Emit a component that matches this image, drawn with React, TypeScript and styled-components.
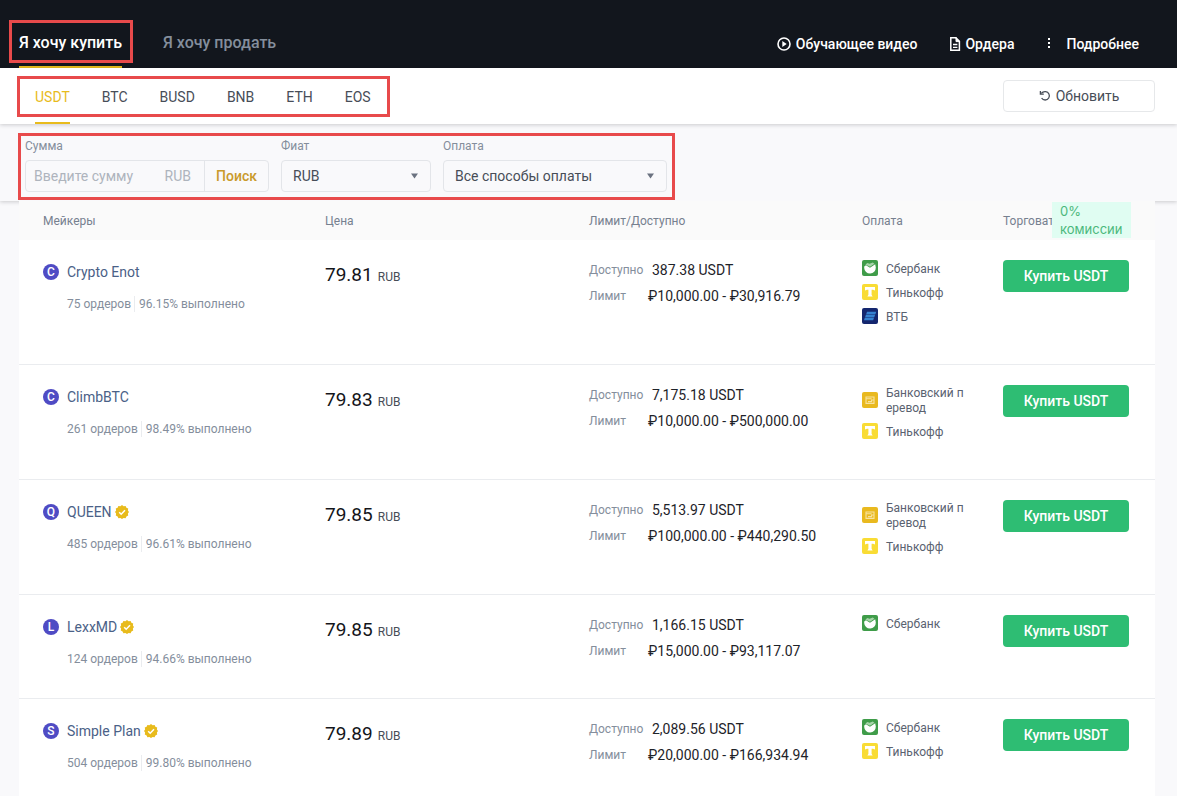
import React from "react";
import styled, { createGlobalStyle, css } from "styled-components";

const ACCENT = "#e8bb1c";

const GlobalStyle = createGlobalStyle`
  *, *::before, *::after { box-sizing: border-box; }
  body {
    margin: 0;
    background: #f9f9fb;
    color: #1e2329;
    font-family: Roboto, "Noto Sans", sans-serif;
    font-size: 14px;
    line-height: 16px;
  }
  button, input, select { font: inherit; color: inherit; margin: 0; }
`;

const Page = styled.div`
  min-height: 100vh;
  overflow: hidden;
`;

/* Red frame drawn around a group of controls */
const Frame = styled.div<{ $inset: string }>`
  position: relative;
  &::after {
    content: "";
    position: absolute;
    inset: ${(p) => p.$inset};
    border: 3px solid #e84a4b;
    pointer-events: none;
    z-index: 2;
  }
`;

const Header = styled.header`
  display: flex;
  justify-content: space-between;
  height: 68px;
  padding: 18px 38px 0 19px;
  background: #12161d;
`;

const ModeTabs = styled.nav`
  display: flex;
  gap: 41px;
`;

const ModeTab = styled.button<{ $active?: boolean }>`
  height: 50px;
  padding: 2px 0 0;
  border: 0;
  background: none;
  font-size: 16px;
  font-weight: 500;
  color: ${(p) => (p.$active ? "#fff" : "#848e9c")};
  border-bottom: 2px solid ${(p) => (p.$active ? ACCENT : "transparent")};
`;

const HeaderLinks = styled.nav`
  display: flex;
  align-items: center;
  gap: 32px;
  padding-top: 2px;
`;

const HeaderLink = styled.a`
  display: flex;
  align-items: center;
  gap: 4px;
  color: #fff;
  font-weight: 500;
  text-decoration: none;
`;

const CoinBar = styled.div`
  position: relative;
  z-index: 1;
  display: flex;
  align-items: center;
  justify-content: space-between;
  height: 56px;
  padding: 0 22px 0 35px;
  background: #fff;
  box-shadow: 0 1px 4px rgba(20, 21, 26, 0.2);
`;

const CoinTabs = styled.nav`
  display: flex;
  gap: 32px;
`;

const CoinTab = styled.button<{ $active?: boolean }>`
  height: 56px;
  padding: 4px 0 0;
  border: 0;
  background: none;
  color: ${(p) => (p.$active ? ACCENT : "#474d57")};
  border-bottom: 2px solid ${(p) => (p.$active ? ACCENT : "transparent")};
`;

const RefreshButton = styled.button`
  display: flex;
  align-items: center;
  justify-content: center;
  gap: 5px;
  width: 152px;
  height: 32px;
  border: 1px solid #e6e8ea;
  border-radius: 4px;
  background: #fff;
  color: #474d57;
`;

const FilterBar = styled.div`
  position: relative;
  display: flex;
  height: 77px;
  padding: 14px 25px 0;
  background: #f9f9fb;
  box-shadow: 0 1px 4px rgba(20, 21, 26, 0.2);
`;

const Filters = styled.form`
  display: flex;
  gap: 12px;
`;

const Field = styled.div<{ $width: number }>`
  width: ${(p) => p.$width}px;
`;

const FieldLabel = styled.label`
  display: block;
  margin-bottom: 6px;
  font-size: 12px;
  color: #848e9c;
`;

const controlBox = css`
  height: 32px;
  border: 1px solid #e3e5e9;
  border-radius: 4px;
`;

const AmountBox = styled.div`
  ${controlBox}
  display: flex;
  align-items: center;
`;

const AmountInput = styled.input`
  flex: 1;
  min-width: 0;
  padding: 0 8px;
  border: 0;
  background: none;
  outline: 0;
  &::placeholder { color: #aeb4bd; opacity: 1; }
`;

const AmountUnit = styled.span`
  padding-right: 13px;
  color: #aeb4bd;
`;

const SearchButton = styled.button`
  width: 64px;
  height: 30px;
  padding: 0;
  border: 0;
  border-left: 1px solid #e3e5e9;
  background: none;
  color: #c99a2b;
  font-weight: 500;
`;

const SelectBox = styled.div`
  position: relative;
  svg {
    position: absolute;
    right: 12px;
    top: 13px;
    pointer-events: none;
  }
`;

const Select = styled.select`
  ${controlBox}
  appearance: none;
  width: 100%;
  padding: 0 24px 0 11px;
  background: none;
  color: #474d57;
`;

const Content = styled.main`
  padding: 0 22px 0 19px;
`;

const Offers = styled.table`
  width: 100%;
  table-layout: fixed;
  border-collapse: collapse;
  background: #fff;
`;

const HeadCell = styled.th<{ $width: number }>`
  position: relative;
  width: ${(p) => p.$width}px;
  height: 39px;
  padding: 0;
  background: #fafafa;
  color: #76808f;
  font-size: 12px;
  font-weight: 400;
  text-align: left;
  &:first-child { padding-left: 24px; }
`;

const FeeBadge = styled.span`
  position: absolute;
  left: 49px;
  top: 1px;
  width: 79px;
  padding: 0 8px;
  background: #e0fdf2;
  color: #4cb87c;
  font-family: Inter, sans-serif;
  font-size: 13px;
  line-height: 18px;
`;

const OfferRow = styled.tr`
  border-bottom: 1px solid #eaecef;
`;

const Cell = styled.td`
  padding: 20px 0 27px;
  vertical-align: top;
  &:first-child { padding-left: 24px; }
`;

const Maker = styled.div`
  display: flex;
  align-items: center;
  height: 24px;
`;

const Avatar = styled.span`
  width: 16px;
  height: 16px;
  margin-right: 8px;
  border-radius: 50%;
  background: #4f4bc4;
  color: #fff;
  font-size: 12px;
  font-weight: 500;
  text-align: center;
`;

const MakerLink = styled.a`
  margin-right: 3px;
  color: #4a6187;
  text-decoration: none;
`;

const Stats = styled.div`
  display: flex;
  align-items: center;
  height: 24px;
  margin-top: 8px;
  padding: 0 0 0 24px;
  color: #848e9c;
  font-size: 12px;
  span + span {
    margin-left: 3px;
    padding-left: 4px;
    border-left: 1px solid #eaecef;
  }
`;

const Price = styled.div`
  padding-top: 1px;
  font-size: 19px;
  line-height: 28px;
  color: #14151a;
  small {
    margin-left: 5px;
    font-size: 12px;
    color: #474d57;
  }
`;

const Limits = styled.dl`
  display: grid;
  grid-template-columns: 55px 1fr;
  align-items: center;
  gap: 8px;
  margin: 0;
  padding-top: 1px;
  line-height: 18px;
`;

const Term = styled.dt`
  font-size: 12px;
  color: #848e9c;
`;

const Value = styled.dd<{ $wide?: boolean }>`
  margin: 0 0 0 ${(p) => (p.$wide ? "-4px" : "0")};
`;

const Payments = styled.ul`
  display: grid;
  gap: 8px;
  margin: 0;
  padding: 0 0 13px;
  list-style: none;
`;

const Payment = styled.li`
  display: flex;
  align-items: center;
  gap: 8px;
  color: #5a6270;
  font-size: 12px;
  line-height: 15px;
  min-height: 16px;
  svg { flex: none; }
  span {
    width: 80px;
    margin: 1px 0 -1px;
    word-break: break-all;
  }
`;

const BuyButton = styled.button`
  width: 126px;
  height: 32px;
  padding: 0;
  border: 0;
  border-radius: 4px;
  background: #2ebd73;
  color: #fff;
  font-weight: 500;
`;

const PlayIcon = () => (
  <svg width="16" height="16" viewBox="0 0 16 16" aria-hidden="true">
    <circle cx="8" cy="8" r="6" fill="none" stroke="#fff" strokeWidth="1.6" />
    <path d="M6.3 5v6l4.4-3z" fill="#fff" />
  </svg>
);

const DocIcon = () => (
  <svg width="12" height="16" viewBox="0 0 12 16" fill="none" stroke="#fff" aria-hidden="true">
    <path d="M1.8 1.8h5l3.6 3.6v8.8H1.8z" strokeWidth="1.5" />
    <path d="M7 1.2v4.4h4" fill="#fff" strokeWidth="1" />
    <path d="M4 8.5h4.4M4 11.3h4.4" strokeWidth="1.3" />
  </svg>
);

const DotsIcon = () => (
  <svg width="16" height="16" viewBox="0 0 16 16" fill="#fff" aria-hidden="true">
    <rect x="2" y="2" width="2" height="2" />
    <rect x="2" y="6" width="2" height="2" />
    <rect x="2" y="10" width="2" height="2" />
  </svg>
);

const RefreshIcon = () => (
  <svg width="12" height="12" viewBox="0 0 12 12" fill="none" stroke="#474d57" strokeWidth="1.3" aria-hidden="true">
    <path d="M2.2 3.4C3.4 2 5 1.4 6.6 1.6a4.2 4.2 0 1 1-4 6.4" />
    <path d="M1.4.9v3.2h3.4" />
  </svg>
);

const Caret = () => (
  <svg width="9" height="6" viewBox="0 0 9 6" aria-hidden="true">
    <path d="M1 .5h7L4.5 5.5z" fill="#6b7280" />
  </svg>
);

const VerifiedIcon = () => (
  <svg width="14" height="14" viewBox="0 0 14 14" role="img" aria-label="Проверен">
    <path
      d="M7 0l1.6 1.2 2-.3.8 1.8 1.8.8-.3 2L14 7l-1.1 1.6.3 2-1.8.8-.8 1.8-2-.3L7 14l-1.6-1.1-2 .3-.8-1.8-1.8-.8.3-2L0 7l1.1-1.5-.3-2 1.8-.8.8-1.8 2 .3z"
      fill={ACCENT}
    />
    <path d="M4.2 7.2l2 2 3.8-3.9" fill="none" stroke="#fff" strokeWidth="1.5" />
  </svg>
);

type Method = "sber" | "tinkoff" | "vtb" | "bank";

const METHOD_NAMES: Record<Method, string> = {
  sber: "Сбербанк",
  tinkoff: "Тинькофф",
  vtb: "ВТБ",
  bank: "Банковский перевод",
};

const METHOD_COLORS: Record<Method, string> = {
  sber: "#3f9c49",
  tinkoff: "#f9dc34",
  vtb: "#14266e",
  bank: "#e9b91f",
};

const MethodIcon = ({ method }: { method: Method }) => (
  <svg width="16" height="16" viewBox="0 0 16 16" aria-hidden="true">
    <rect width="16" height="16" rx="2" fill={METHOD_COLORS[method]} />
    {method === "sber" && (
      <>
        <path d="M2.2 6.6L4 5.2l4 2.6 5.2-3.6.6 3.4A5.8 5.8 0 0 1 2.2 8z" fill="#fff" />
        <path d="M3.4 4.6L5.4 3l2.2.8L10.8 2.4l1.6 1.4L8 6.8z" fill="#a6d4a9" />
      </>
    )}
    {method === "tinkoff" && <path d="M3 3h10v3.6l-2-.8H9.6v5l1 1.8H5.4l1-1.8v-5H5l-2 .8z" fill="#fff" />}
    {method === "vtb" && (
      <path d="M5 3.8h9.2l-.8 2.4H4.2zM3.9 6.8h9.2l-.8 2.4H3.1zM2.8 9.8H12l-.8 2.4H2z" fill="#3581d0" />
    )}
    {method === "bank" && (
      <g fill="none" stroke="#f8e3a0" strokeWidth="1.1">
        <path d="M4 5h8v6.4H4z" />
        <path d="M4 6.8h5.6M12 8H9.6v1.6H6" />
      </g>
    )}
  </svg>
);

interface Offer {
  maker: string;
  verified?: boolean;
  orders: number;
  rate: string;
  price: string;
  available: string;
  limit: string;
  methods: Method[];
}

const OFFERS: Offer[] = [
  { maker: "Crypto Enot", orders: 75, rate: "96.15", price: "79.81", available: "387.38", limit: "₽10,000.00 - ₽30,916.79", methods: ["sber", "tinkoff", "vtb"] },
  { maker: "ClimbBTC", orders: 261, rate: "98.49", price: "79.83", available: "7,175.18", limit: "₽10,000.00 - ₽500,000.00", methods: ["bank", "tinkoff"] },
  { maker: "QUEEN", verified: true, orders: 485, rate: "96.61", price: "79.85", available: "5,513.97", limit: "₽100,000.00 - ₽440,290.50", methods: ["bank", "tinkoff"] },
  { maker: "LexxMD", verified: true, orders: 124, rate: "94.66", price: "79.85", available: "1,166.15", limit: "₽15,000.00 - ₽93,117.07", methods: ["sber"] },
  { maker: "Simple Plan", verified: true, orders: 504, rate: "99.80", price: "79.89", available: "2,089.56", limit: "₽20,000.00 - ₽166,934.94", methods: ["sber", "tinkoff"] },
];

const COINS = ["USDT", "BTC", "BUSD", "BNB", "ETH", "EOS"];

export default function App() {
  return (
    <Page>
      <GlobalStyle />
      <Header>
        <ModeTabs>
          <Frame $inset="2px -11px 5px -10px">
            <ModeTab $active>Я хочу купить</ModeTab>
          </Frame>
          <ModeTab>Я хочу продать</ModeTab>
        </ModeTabs>
        <HeaderLinks>
          <HeaderLink href="#video"><PlayIcon />Обучающее видео</HeaderLink>
          <HeaderLink href="#orders"><DocIcon />Ордера</HeaderLink>
          <HeaderLink href="#more"><DotsIcon />Подробнее</HeaderLink>
        </HeaderLinks>
      </Header>

      <CoinBar>
        <Frame $inset="8px -19px 7px -18px">
          <CoinTabs>
            {COINS.map((coin, i) => (
              <CoinTab key={coin} $active={i === 0}>{coin}</CoinTab>
            ))}
          </CoinTabs>
        </Frame>
        <RefreshButton><RefreshIcon />Обновить</RefreshButton>
      </CoinBar>

      <FilterBar>
        <Frame $inset="-5px -8px 1px -7px">
          <Filters onSubmit={(e) => e.preventDefault()}>
            <Field $width={244}>
              <FieldLabel htmlFor="amount">Сумма</FieldLabel>
              <AmountBox>
                <AmountInput id="amount" placeholder="Введите сумму" />
                <AmountUnit>RUB</AmountUnit>
                <SearchButton type="submit">Поиск</SearchButton>
              </AmountBox>
            </Field>
            <Field $width={150}>
              <FieldLabel htmlFor="fiat">Фиат</FieldLabel>
              <SelectBox>
                <Select id="fiat"><option>RUB</option></Select>
                <Caret />
              </SelectBox>
            </Field>
            <Field $width={224}>
              <FieldLabel htmlFor="payment">Оплата</FieldLabel>
              <SelectBox>
                <Select id="payment"><option>Все способы оплаты</option></Select>
                <Caret />
              </SelectBox>
            </Field>
          </Filters>
        </Frame>
      </FilterBar>

      <Content>
        <Offers>
          <thead>
            <tr>
              <HeadCell $width={306}>Мейкеры</HeadCell>
              <HeadCell $width={264}>Цена</HeadCell>
              <HeadCell $width={273}>Лимит/Доступно</HeadCell>
              <HeadCell $width={141}>Оплата</HeadCell>
              <HeadCell $width={152}>
                Торговать
                <FeeBadge>0% комиссии</FeeBadge>
              </HeadCell>
            </tr>
          </thead>
          <tbody>
            {OFFERS.map((o) => (
              <OfferRow key={o.maker}>
                <Cell>
                  <Maker>
                    <Avatar>{o.maker[0]}</Avatar>
                    <MakerLink href="#maker">{o.maker}</MakerLink>
                    {o.verified && <VerifiedIcon />}
                  </Maker>
                  <Stats><span>{o.orders} ордеров</span><span>{o.rate}% выполнено</span></Stats>
                </Cell>
                <Cell><Price>{o.price}<small>RUB</small></Price></Cell>
                <Cell>
                  <Limits>
                    <Term>Доступно</Term><Value>{o.available} USDT</Value>
                    <Term>Лимит</Term><Value $wide>{o.limit}</Value>
                  </Limits>
                </Cell>
                <Cell>
                  <Payments>
                    {o.methods.map((m) => (
                      <Payment key={m}><MethodIcon method={m} /><span>{METHOD_NAMES[m]}</span></Payment>
                    ))}
                  </Payments>
                </Cell>
                <Cell><BuyButton>Купить USDT</BuyButton></Cell>
              </OfferRow>
            ))}
          </tbody>
        </Offers>
      </Content>
    </Page>
  );
}
